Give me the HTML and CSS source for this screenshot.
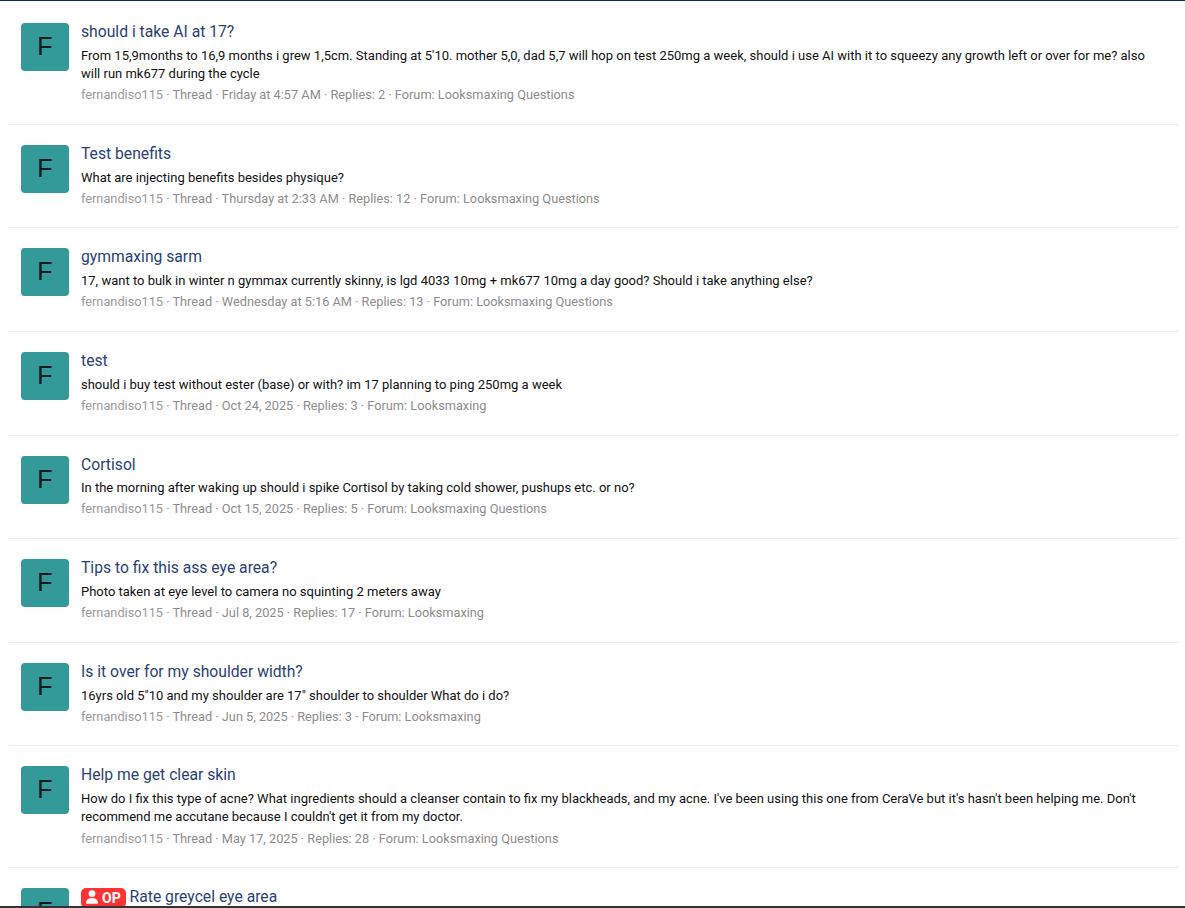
FILE: index.html
```html
<!DOCTYPE html>
<html lang="en">
<head>
  <meta charset="UTF-8" />
  <title>fernandiso115 threads</title>
  <link rel="stylesheet" href="styles.css">
</head>
<body>
  <div class="page">
    <div class="top-bar"></div>
    <ol class="results">
      <li class="result">
        <div class="avatar">F</div>
        <div class="result-body">
          <h3 class="result-title">should i take AI at 17?</h3>
          <p class="snippet">From 15,9months to 16,9 months i grew 1,5cm. Standing at 5'10. mother 5,0, dad 5,7 will hop on test 250mg a week, should i use AI with it to squeezy any growth left or over for me? also will run mk677 during the cycle</p>
          <p class="meta"><span class="user">fernandiso115</span> · Thread · Friday at 4:57 AM · Replies: 2 · Forum: Looksmaxing Questions</p>
        </div>
      </li>
      <li class="result">
        <div class="avatar">F</div>
        <div class="result-body">
          <h3 class="result-title">Test benefits</h3>
          <p class="snippet">What are injecting benefits besides physique?</p>
          <p class="meta"><span class="user">fernandiso115</span> · Thread · Thursday at 2:33 AM · Replies: 12 · Forum: Looksmaxing Questions</p>
        </div>
      </li>
      <li class="result">
        <div class="avatar">F</div>
        <div class="result-body">
          <h3 class="result-title">gymmaxing sarm</h3>
          <p class="snippet">17, want to bulk in winter n gymmax currently skinny, is lgd 4033 10mg + mk677 10mg a day good? Should i take anything else?</p>
          <p class="meta"><span class="user">fernandiso115</span> · Thread · Wednesday at 5:16 AM · Replies: 13 · Forum: Looksmaxing Questions</p>
        </div>
      </li>
      <li class="result">
        <div class="avatar">F</div>
        <div class="result-body">
          <h3 class="result-title">test</h3>
          <p class="snippet">should i buy test without ester (base) or with? im 17 planning to ping 250mg a week</p>
          <p class="meta"><span class="user">fernandiso115</span> · Thread · Oct 24, 2025 · Replies: 3 · Forum: Looksmaxing</p>
        </div>
      </li>
      <li class="result">
        <div class="avatar">F</div>
        <div class="result-body">
          <h3 class="result-title">Cortisol</h3>
          <p class="snippet">In the morning after waking up should i spike Cortisol by taking cold shower, pushups etc. or no?</p>
          <p class="meta"><span class="user">fernandiso115</span> · Thread · Oct 15, 2025 · Replies: 5 · Forum: Looksmaxing Questions</p>
        </div>
      </li>
      <li class="result">
        <div class="avatar">F</div>
        <div class="result-body">
          <h3 class="result-title">Tips to fix this ass eye area?</h3>
          <p class="snippet">Photo taken at eye level to camera no squinting 2 meters away</p>
          <p class="meta"><span class="user">fernandiso115</span> · Thread · Jul 8, 2025 · Replies: 17 · Forum: Looksmaxing</p>
        </div>
      </li>
      <li class="result">
        <div class="avatar">F</div>
        <div class="result-body">
          <h3 class="result-title">Is it over for my shoulder width?</h3>
          <p class="snippet">16yrs old 5"10 and my shoulder are 17" shoulder to shoulder What do i do?</p>
          <p class="meta"><span class="user">fernandiso115</span> · Thread · Jun 5, 2025 · Replies: 3 · Forum: Looksmaxing</p>
        </div>
      </li>
      <li class="result">
        <div class="avatar">F</div>
        <div class="result-body">
          <h3 class="result-title">Help me get clear skin</h3>
          <p class="snippet">How do I fix this type of acne? What ingredients should a cleanser contain to fix my blackheads, and my acne. I've been using this one from CeraVe but it's hasn't been helping me. Don't recommend me accutane because I couldn't get it from my doctor.</p>
          <p class="meta"><span class="user">fernandiso115</span> · Thread · May 17, 2025 · Replies: 28 · Forum: Looksmaxing Questions</p>
        </div>
      </li>
      <li class="result">
        <div class="avatar">F</div>
        <div class="result-body">
          <h3 class="result-title">
            <span class="op-badge">
              <svg viewBox="0 0 448 512" width="12" height="14" fill="currentColor"><path d="M224 256a128 128 0 1 0 0-256 128 128 0 1 0 0 256zm-45.700 48C79.800 304 0 383.800 0 482.300 0 498.700 13.300 512 29.700 512h388.600c16.400 0 29.700-13.300 29.700-29.700C448 383.800 368.200 304 269.700 304h-91.400z"/></svg>
              OP
            </span>
            Rate greycel eye area
          </h3>
        </div>
      </li>
    </ol>
    <div class="bottom-bar"></div>
  </div>
</body>
</html>
```

FILE: styles.css
```css
* { box-sizing: border-box; margin: 0; padding: 0; }
html, body { height: 100%; }
body {
  font-family: 'Roboto', 'Noto Sans', sans-serif;
  font-size: 13px;
  background: #fff;
  overflow: hidden;
}
.page {
  display: flex;
  flex-direction: column;
  height: 100%;
}
.top-bar {
  flex: 0 0 1px;
  background: #0f2a5f;
}
.bottom-bar {
  flex: 0 0 2px;
  background: #333;
}
.results {
  flex: 1;
  list-style: none;
  overflow: hidden;
  padding: 1.8px 6px 0 9px;
}
.result {
  display: flex;
  gap: 12px;
  padding: 20px 12px 19.45px;
  border-bottom: 1px solid #ececec;
}
.avatar {
  flex: 0 0 48px;
  height: 48px;
  background: #339999;
  border-radius: 4px;
  color: #0f1a1a;
  font-family: 'Liberation Sans', sans-serif;
  font-size: 25px;
  line-height: 47px;
  text-align: center;
}
.result-body { flex: 1; min-width: 0; }
.result-title {
  color: #2a3f78;
  font-size: 15.7px;
  font-weight: 400;
  line-height: 18.6px;
}
.snippet {
  color: #111;
  line-height: 18.2px;
  margin-top: 5.3px;
}
.meta {
  color: #8c8c8c;
  font-size: 12.75px;
  line-height: 18.2px;
  margin-top: 2.9px;
}
.user { color: #9a9a9a; }
.op-badge {
  display: inline-flex;
  align-items: center;
  gap: 4px;
  margin-top: -2px;
  padding: 0 5px;
  height: 20px;
  background: #ff3333;
  border-radius: 5px;
  color: #fff;
  font-size: 14px;
  font-weight: 700;
  line-height: 18px;
  vertical-align: -2px;
}
.op-badge svg { margin-top: -1px; }
```
